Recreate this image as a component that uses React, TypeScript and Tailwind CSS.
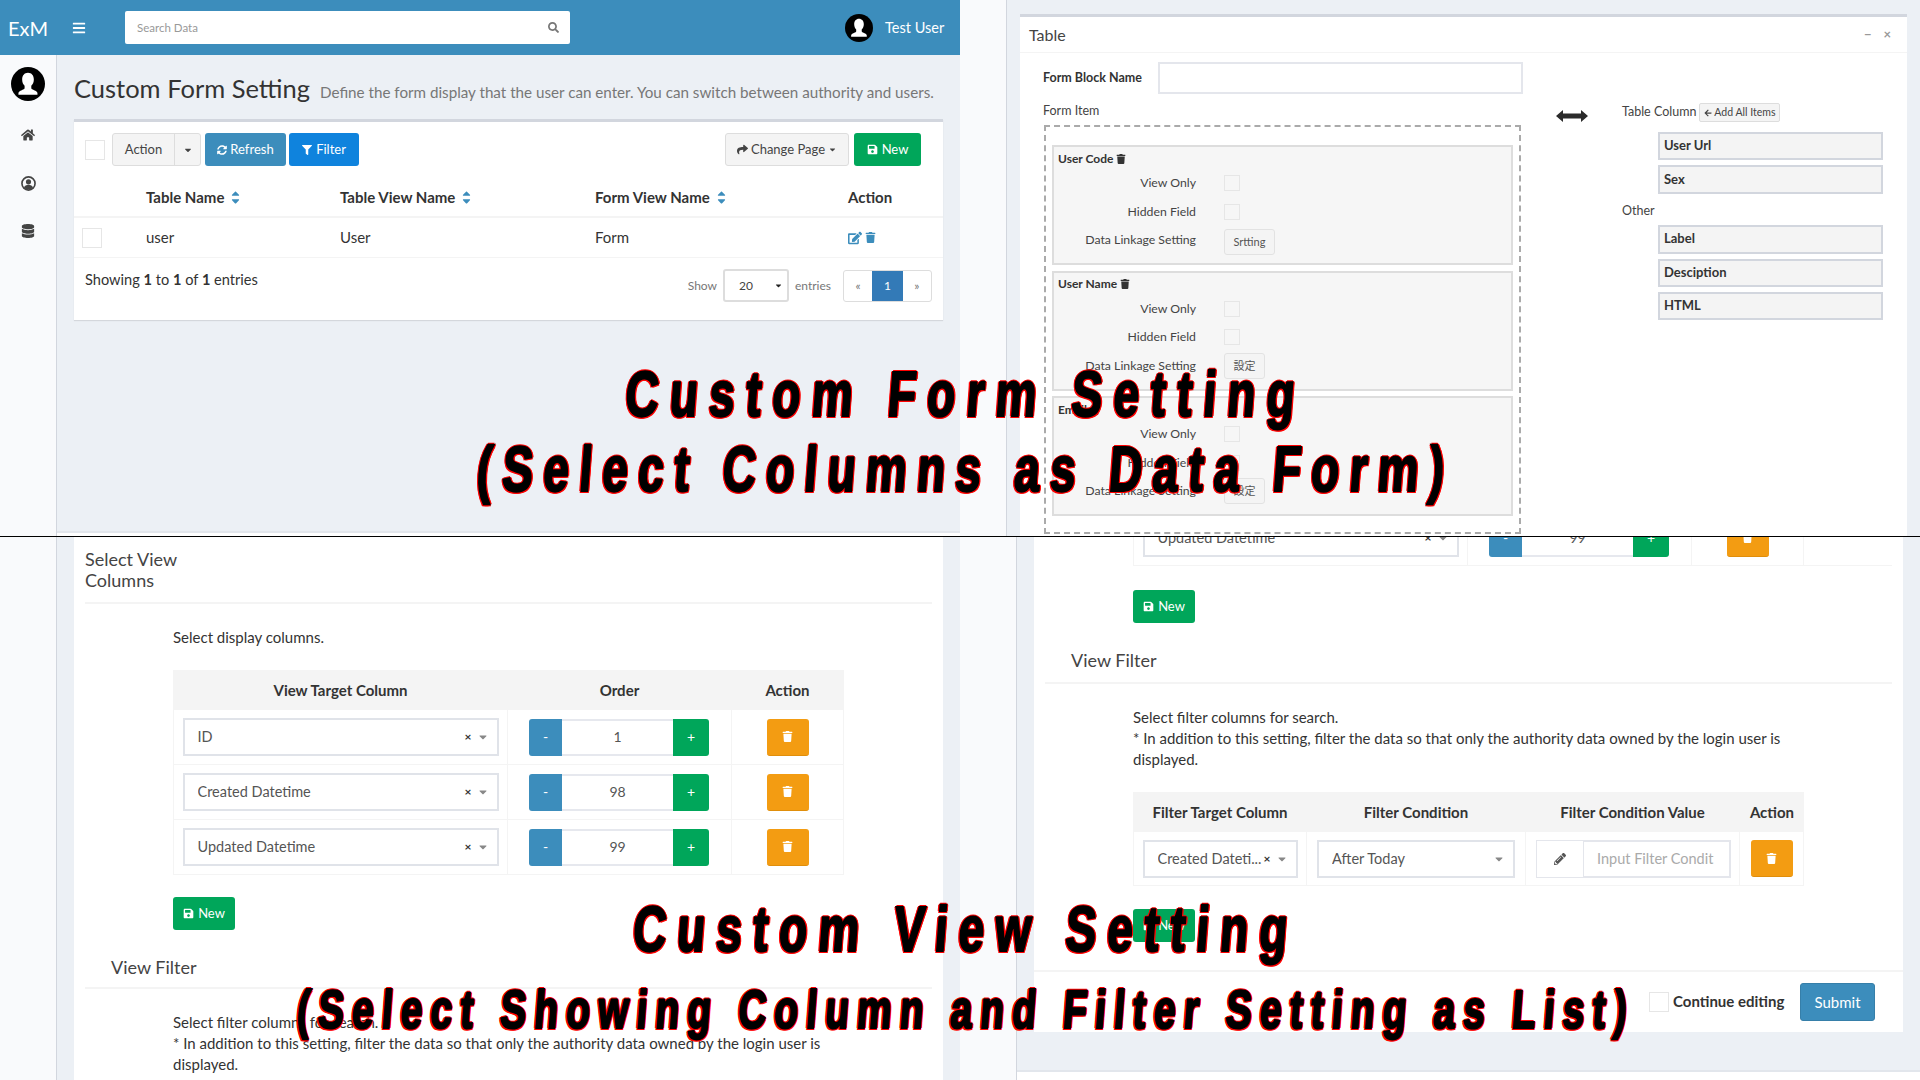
import type { ReactNode } from 'react';
import {
  FaArrowLeft,
  FaBars,
  FaCaretDown,
  FaDatabase,
  FaEdit,
  FaFilter,
  FaHome,
  FaPencilAlt,
  FaSave,
  FaSearch,
  FaShare,
  FaSortDown,
  FaSortUp,
  FaSyncAlt,
  FaTrash,
} from 'react-icons/fa';

function Avatar({ className }: { className: string }) {
  return (
    <svg viewBox="0 0 32 32" className={className}>
      <circle cx="16" cy="16" r="16" fill="#000" />
      <path
        d="M16 5.5c3.4 0 5.5 2.7 5.5 6.2 0 2.6-1 4.6-2.4 5.9v2.2c0 .9 1 1.3 2.6 2 1.8.7 3.2 1.4 3.2 2.9V26H7v-1.3c0-1.5 1.4-2.2 3.2-2.9 1.6-.7 2.6-1.1 2.6-2v-2.2c-1.4-1.3-2.3-3.3-2.3-5.9 0-3.5 2.1-6.2 5.5-6.2z"
        fill="#fff"
      />
    </svg>
  );
}

function UserCircle() {
  return (
    <svg viewBox="0 0 32 32" className="size-[15px]">
      <circle cx="16" cy="16" r="14" fill="none" stroke="#444" strokeWidth="3.5" />
      <circle cx="16" cy="12.5" r="5.5" fill="#444" />
      <path d="M6.5 25c1-5 5-6.5 9.5-6.5s8.500 1.500 9.500 6.500c-2.500 2.500-6 4-9.500 4s-7-1.500-9.500-4z" fill="#444" />
    </svg>
  );
}

function Check({ className = 'size-5 bg-white' }: { className?: string }) {
  return <span className={`inline-block shrink-0 border border-[#e6e6e6] ${className}`} />;
}

function Sidebar({ width, children }: { width: string; children?: ReactNode }) {
  return (
    <aside className={`flex h-full shrink-0 flex-col items-center border-r border-[#d2d6de] bg-[#f9fafc] ${width}`}>
      {children}
    </aside>
  );
}

function SortIcon() {
  return (
    <span className="relative ml-[5px] inline-block h-[15px] w-[11px] text-[#3c8dbc]">
      <FaSortUp className="absolute left-0 top-0 size-[13px]" />
      <FaSortDown className="absolute left-0 top-[2px] size-[13px]" />
    </span>
  );
}

function NewButton() {
  return (
    <button
      type="button"
      className="flex h-[33px] w-[62px] items-center justify-center gap-1 rounded-[3px] bg-[#00a65a] text-[13px] text-white"
    >
      <FaSave className="size-[11px]" />
      New
    </button>
  );
}

function TrashButton({ height = 'h-[37px]' }: { height?: string }) {
  return (
    <button
      type="button"
      className={`flex w-[42px] items-center justify-center rounded-[3px] border-b border-[#e08e0b] bg-[#f39c12] text-white ${height}`}
    >
      <FaTrash className="size-[11px]" />
    </button>
  );
}

function SelectBox({
  label,
  clear = true,
  className,
}: {
  label: string;
  clear?: boolean;
  className: string;
}) {
  return (
    <div className={`flex h-[38px] items-center border-2 border-[#e0e3e9] bg-white pl-[13px] pr-[8px] text-[14.500px] text-[#555] ${className}`}>
      <span className="flex-1 truncate">{label}</span>
      {clear && <span className="mr-[5px] text-xs font-bold text-[#333]">×</span>}
      <FaCaretDown className="size-[12px] text-[#888]" />
    </div>
  );
}

function OrderStepper({ value }: { value: string }) {
  return (
    <div className="flex h-[37px] w-[180px] text-sm">
      <span className="flex w-[33px] items-center justify-center rounded-l-[3px] bg-[#3c8dbc] text-white">-</span>
      <span className="flex flex-1 items-center justify-center border-y-2 border-[#e6e8ee] bg-white text-[#555]">{value}</span>
      <span className="flex w-[36px] items-center justify-center rounded-r-[3px] bg-[#00a65a] text-white">+</span>
    </div>
  );
}

function ColumnRow({ label, order }: { label: string; order: string }) {
  return (
    <div className="grid h-[55px] grid-cols-[335px_223px_113px] border-b border-[#f4f4f4]">
      <div className="flex items-center justify-center border-x border-[#f4f4f4]">
        <SelectBox label={label} className="w-[316px]" />
      </div>
      <div className="flex items-center pl-[21px]">
        <OrderStepper value={order} />
      </div>
      <div className="flex items-center justify-center border-x border-[#f4f4f4]">
        <TrashButton />
      </div>
    </div>
  );
}

function SelectColumnsTable() {
  return (
    <div className="w-[671px]">
      <div className="grid h-10 grid-cols-[335px_223px_113px] items-center bg-[#f4f4f4] text-center text-[15px] font-bold text-[#333]">
        <span>View Target Column</span>
        <span>Order</span>
        <span>Action</span>
      </div>
      <ColumnRow label="ID" order="1" />
      <ColumnRow label="Created Datetime" order="98" />
      <ColumnRow label="Updated Datetime" order="99" />
    </div>
  );
}

function FilterIntro() {
  return (
    <p className="w-[671px] text-[15px] leading-[21px] text-[#333]">
      Select filter columns for search.
      <br />* In addition to this setting, filter the data so that only the authority data owned by the login user is displayed.
    </p>
  );
}

function TopLeftPanel() {
  return (
    <section className="flex h-full flex-col overflow-hidden bg-[#ecf0f5]">
      <header className="flex h-[55px] shrink-0 items-center bg-[#3c8dbc] text-white">
        <span className="ml-2 text-[20px] leading-none">ExM</span>
        <FaBars className="ml-[24px] size-[14px]" />
        <div className="ml-[39px] flex h-[33px] w-[445px] items-center rounded-[2px] bg-white pl-3 pr-[11px] text-[11.500px] text-[#999]">
          <span className="flex-1">Search Data</span>
          <FaSearch className="size-[11px] text-[#777]" />
        </div>
        <Avatar className="ml-[275px] size-[28px]" />
        <span className="ml-[12px] text-[14.500px]">Test User</span>
      </header>
      <div className="flex min-h-0 flex-1">
        <Sidebar width="w-[57px]">
          <Avatar className="mt-[12px] size-[34px]" />
          <FaHome className="mt-[27px] size-[14px] text-[#444]" />
          <div className="mt-[34px]">
            <UserCircle />
          </div>
          <FaDatabase className="mt-[33px] size-[14px] text-[#444]" />
        </Sidebar>
        <div className="ml-[17px] flex flex-1 flex-col">
          <div className="flex h-[64px] items-baseline pt-[14px]">
            <h1 className="text-[25.500px] text-[#333]">Custom Form Setting</h1>
            <span className="ml-[10px] text-[15.200px] text-[#777]">
              Define the form display that the user can enter. You can switch between authority and users.
            </span>
          </div>
          <div className="h-[201px] w-[869px] border-t-[3px] border-[#d2d6de] bg-white text-[15px] text-[#333] shadow-[0_1px_1px_rgba(0,0,0,0.1)]">
            <div className="flex h-[56px] items-start pl-[11px] pr-[22px] pt-[11px] text-[13px]">
              <Check className="mt-[7px] size-[20px] bg-white" />
              <div className="ml-[7px] flex h-[33px] w-[89px] rounded-[3px] border border-[#ddd] bg-[#f4f4f4] text-[#444]">
                <span className="flex w-[62px] items-center justify-center border-r border-[#ddd]">Action</span>
                <span className="flex flex-1 items-center justify-center">
                  <FaCaretDown className="size-[10px]" />
                </span>
              </div>
              <button type="button" className="ml-[4px] flex h-[33px] w-[81px] items-center justify-center gap-[3px] rounded-[3px] bg-[#3c8dbc] text-white">
                <FaSyncAlt className="size-[10px]" />
                Refresh
              </button>
              <button type="button" className="ml-[3px] flex h-[33px] w-[70px] items-center justify-center gap-[4px] rounded-[3px] bg-[#0f83dd] text-white">
                <FaFilter className="size-[10px]" />
                Filter
              </button>
              <button type="button" className="ml-auto flex h-[33px] w-[124px] items-center justify-center gap-[3px] rounded-[3px] border border-[#ddd] bg-[#f4f4f4] text-[#444]">
                <FaShare className="size-[11px]" />
                Change Page
                <FaCaretDown className="size-[9px]" />
              </button>
              <div className="ml-[5px] [&>button]:w-[67px]">
                <NewButton />
              </div>
            </div>
            <div className="grid h-[40px] grid-cols-[72px_194px_255px_253px_1fr] items-center border-b-2 border-[#f4f4f4] font-bold">
              <span />
              <span className="flex items-center">Table Name<SortIcon /></span>
              <span className="flex items-center">Table View Name<SortIcon /></span>
              <span className="flex items-center">Form View Name<SortIcon /></span>
              <span>Action</span>
            </div>
            <div className="grid h-[40px] grid-cols-[72px_194px_255px_253px_1fr] items-center border-b border-[#f4f4f4]">
              <span className="pl-[8px] pt-[6px]"><Check /></span>
              <span>user</span>
              <span>User</span>
              <span>Form</span>
              <span className="flex items-center gap-[3px] text-[#3c8dbc]">
                <FaEdit className="size-[14px]" />
                <FaTrash className="size-[11px]" />
              </span>
            </div>
            <div className="flex justify-between pl-[11px] pr-[11px]">
              <p className="pt-[11px] text-[14.600px]">
                Showing <b>1</b> to <b>1</b> of <b>1</b> entries
              </p>
              <div className="flex items-center pt-[11px] text-xs text-[#777]">
                <span>Show</span>
                <span className="ml-[6px] flex h-[33px] w-[66px] items-center justify-between rounded-[3px] border-2 border-[#ddd] pl-[14px] pr-[4px] text-[#444]">
                  20
                  <FaCaretDown className="size-[9px] text-[#222]" />
                </span>
                <span className="ml-[6px]">entries</span>
                <div className="ml-[12px] flex h-[32px] w-[89px] rounded-[3px] border border-[#ddd] text-center leading-[30px]">
                  <span className="w-[29px]">«</span>
                  <span className="w-[31px] bg-[#337ab7] text-white">1</span>
                  <span className="w-[29px]">»</span>
                </div>
              </div>
            </div>
          </div>
          <div className="ml-[-17px] mt-[211px] flex-1 border-t-2 border-[#e2e6ec] bg-white" />
        </div>
      </div>
    </section>
  );
}

function FormRow({ label, children }: { label: string; children: ReactNode }) {
  return (
    <div className="flex h-[28.500px] items-center">
      <span className="w-[142px] text-right text-[12.250px] text-[#444]">{label}</span>
      <span className="ml-[28px] flex">{children}</span>
    </div>
  );
}

function FormBlock({ title, setting, wide }: { title: string; setting: string; wide?: boolean }) {
  return (
    <div className="h-[120px] border-2 border-[#ddd] bg-[#f6f6f6]">
      <div className="flex h-[22px] items-center gap-[3px] pl-[4px] pt-[1px] text-xs font-bold text-[#333]">
        {title}
        <FaTrash className="size-[10px]" />
      </div>
      <FormRow label="View Only"><Check className="size-[16px]" /></FormRow>
      <FormRow label="Hidden Field"><Check className="size-[16px]" /></FormRow>
      <FormRow label="Data Linkage Setting">
        <span className={`flex h-[26px] items-center justify-center rounded-[3px] border border-[#e2e2e2] bg-[#f4f4f4] text-[11px] text-[#555] ${wide ? 'mt-[3px] w-[51px]' : 'w-[41px]'}`}>
          {setting}
        </span>
      </FormRow>
    </div>
  );
}

function ColumnItem({ label, height }: { label: string; height: string }) {
  return (
    <div className={`flex w-[225px] items-center border-2 border-[#d2d6de] bg-[#f4f4f4] pl-[4px] text-[13px] font-bold text-[#333] ${height}`}>
      {label}
    </div>
  );
}

function TopRightPanel() {
  return (
    <section className="flex h-full overflow-hidden bg-[#ecf0f5]">
      <Sidebar width="w-[47px]" />
      <div className="ml-[13px] mt-[14px] h-[600px] w-[887px] border-t-[3px] border-[#d2d6de] bg-white text-[#333]">
        <div className="flex h-[36px] items-center border-b border-[#f4f4f4] pl-[9px] pr-[16px] text-base text-[#444]">
          <span className="flex-1">Table</span>
          <span className="text-[13px] font-bold text-[#999]">−</span>
          <span className="ml-[12px] text-[13px] font-bold text-[#999]">×</span>
        </div>
        <div className="flex">
          <div className="ml-[23px] w-[480px]">
            <div className="mt-[9px] flex h-[32px] items-center">
              <span className="w-[115px] text-[12.500px] font-bold">Form Block Name</span>
              <span className="h-[32px] w-[365px] border-2 border-[#e4e6ec] bg-white" />
            </div>
            <p className="mt-[8px] h-[17px] text-[12.500px] text-[#444]">Form Item</p>
            <div className="ml-[1px] mt-[6px] h-[409px] w-[477px] border-2 border-dashed border-[#aaa] px-[6px] pt-[18px]">
              <div className="flex flex-col gap-[5.500px]">
                <FormBlock title="User Code" setting="Srtting" wide />
                <FormBlock title="User Name" setting="設定" />
                <FormBlock title="Email" setting="設定" />
              </div>
            </div>
          </div>
          <div className="ml-[33px] mt-[56px]">
            <svg viewBox="0 0 32 14" className="h-[14px] w-[32px]">
              <path d="M0 7l7-6v3.500h18V1l7 6-7 6V9.500H7V13z" fill="#2b2b2b" />
            </svg>
          </div>
          <div className="ml-[34px] mt-[50px] text-[12.500px] text-[#444]">
            <div className="flex h-[19px] items-center gap-[3px]">
              Table Column
              <span className="flex h-[19px] w-[81px] items-center justify-center gap-[2px] rounded-[2px] border border-[#ddd] bg-[#f4f4f4] text-[10.500px]">
                <FaArrowLeft className="size-[8px]" />
                Add All Items
              </span>
            </div>
            <div className="ml-[36px] mt-[10px] flex flex-col gap-[5px]">
              <ColumnItem label="User Url" height="h-[28px]" />
              <ColumnItem label="Sex" height="h-[28.500px]" />
            </div>
            <p className="mt-[8px] h-[23px] leading-[18px]">Other</p>
            <div className="ml-[36px] flex flex-col gap-[5px]">
              <ColumnItem label="Label" height="h-[29px]" />
              <ColumnItem label="Desciption" height="h-[28px]" />
              <ColumnItem label="HTML" height="h-[28.500px]" />
            </div>
          </div>
        </div>
      </div>
    </section>
  );
}

function BottomLeftPanel() {
  return (
    <section className="flex h-full overflow-hidden bg-[#ecf0f5]">
      <Sidebar width="w-[57px]" />
      <div className="ml-[17px] h-full w-[869px] bg-white px-[11px] text-[#333]">
        <h3 className="border-b-2 border-[#f4f4f4] pb-[11px] pt-[12px] text-lg leading-[21px] text-[#444]">
          Select View
          <br />
          Columns
        </h3>
        <div className="pl-[88px]">
          <p className="mt-[23px] text-[15px] leading-[21px]">Select display columns.</p>
          <div className="mt-[22px]">
            <SelectColumnsTable />
          </div>
          <div className="mt-[22px]">
            <NewButton />
          </div>
        </div>
        <h3 className="mt-[27px] border-b-2 border-[#f4f4f4] pb-[9px] pl-[26px] text-lg leading-[21px] text-[#444]">View Filter</h3>
        <div className="mt-[23px] pl-[88px]">
          <FilterIntro />
        </div>
      </div>
    </section>
  );
}

function BottomRightPanel() {
  return (
    <section className="flex h-full overflow-hidden bg-[#ecf0f5]">
      <Sidebar width="w-[57px]" />
      <div className="flex flex-1 flex-col">
        <div className="ml-[17px] flex h-[495px] w-[869px] shrink-0 flex-col bg-white text-[#333]">
          <div className="flex-1 px-[11px]">
            <div className="ml-[88px] mt-[-26px]">
              <ColumnRow label="Updated Datetime" order="99" />
            </div>
            <div className="ml-[88px] mt-[24px]">
              <NewButton />
            </div>
            <h3 className="mt-[27px] border-b-2 border-[#f4f4f4] pb-[11px] pl-[26px] text-lg leading-[21px] text-[#444]">View Filter</h3>
            <div className="ml-[88px] mt-[23px]">
              <FilterIntro />
              <div className="mt-[22px] w-[671px]">
                <div className="grid h-10 grid-cols-[174px_218px_215px_64px] items-center bg-[#f4f4f4] text-center text-[15px] font-bold">
                  <span>Filter Target Column</span>
                  <span>Filter Condition</span>
                  <span>Filter Condition Value</span>
                  <span>Action</span>
                </div>
                <div className="grid h-[54px] grid-cols-[174px_218px_215px_64px] border-b border-[#f4f4f4]">
                  <div className="flex items-center justify-center border-x border-[#f4f4f4]">
                    <SelectBox label="Created Dateti..." className="w-[155px]" />
                  </div>
                  <div className="flex items-center justify-center">
                    <SelectBox label="After Today" clear={false} className="w-[198px]" />
                  </div>
                  <div className="flex items-center border-x border-[#f4f4f4] pl-[10px]">
                    <span className="flex h-[38px] w-[48px] items-center justify-center border border-[#e4e6ec] text-[#555]">
                      <FaPencilAlt className="size-[12px]" />
                    </span>
                    <span className="flex h-[38px] w-[147px] items-center border-2 border-l-0 border-[#e4e6ec] pl-[13px] text-[14.500px] text-[#aaa]">
                      Input Filter Condit
                    </span>
                  </div>
                  <div className="flex items-center justify-center border-r border-[#f4f4f4]">
                    <TrashButton />
                  </div>
                </div>
              </div>
              <div className="mt-[23px]">
                <NewButton />
              </div>
            </div>
          </div>
          <div className="flex h-[62px] items-start border-t-2 border-[#f4f4f4] pl-[615px] pt-[11px]">
            <Check className="mt-[9px] size-5 bg-white" />
            <span className="ml-[4px] mt-[7px] text-[15px] font-bold">Continue editing</span>
            <button type="button" className="ml-auto mr-[28px] h-[38px] w-[75px] rounded-[3px] border border-[#367fa9] bg-[#3c8dbc] text-[15px] text-white">
              Submit
            </button>
          </div>
        </div>
        <div className="mt-[38px] flex-1 border-t-2 border-[#e2e6ec] bg-white" />
      </div>
    </section>
  );
}

function Caption({ top, size, spacing, children }: { top: string; size: string; spacing: string; children: string }) {
  return (
    <p
      className={`absolute left-[6px] w-full scale-x-[0.72] skew-x-[-6deg] whitespace-nowrap text-center font-['Liberation_Sans',sans-serif] font-bold leading-none text-black [-webkit-text-stroke:2px_#000] [text-shadow:2.6px_0_#f00,-2.6px_0_#f00,0_2px_#f00,0_-2px_#f00,1.9px_1.5px_#f00,-1.9px_1.5px_#f00,1.9px_-1.5px_#f00,-1.9px_-1.5px_#f00] ${top} ${size} ${spacing}`}
    >
      {children}
    </p>
  );
}

export default function App() {
  return (
    <div className="relative grid h-[1080px] w-[1920px] grid-cols-[960px_960px] grid-rows-[536px_1px_543px] overflow-hidden font-['Lato','Noto_Sans_CJK_JP',sans-serif]">
      <TopLeftPanel />
      <TopRightPanel />
      <div className="col-span-2 bg-black" />
      <BottomLeftPanel />
      <BottomRightPanel />
      <Caption top="top-[362px]" size="text-[64px]" spacing="tracking-[15.500px]">Custom Form Setting</Caption>
      <Caption top="top-[437px]" size="text-[64px]" spacing="tracking-[14.200px]">(Select Columns as Data Form)</Caption>
      <Caption top="top-[897px]" size="text-[64px]" spacing="tracking-[15.200px]">Custom View Setting</Caption>
      <Caption top="top-[982px]" size="text-[54px]" spacing="tracking-[11.300px]">(Select Showing Column and Filter Setting as List)</Caption>
    </div>
  );
}
